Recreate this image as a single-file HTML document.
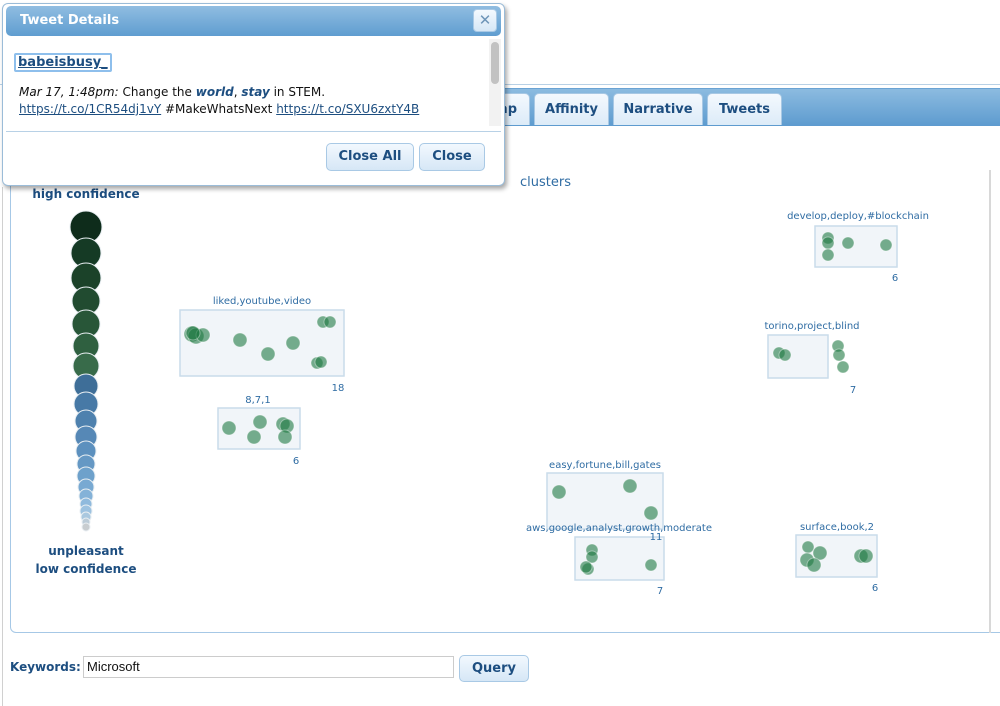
<!DOCTYPE html>
<html><head><meta charset="utf-8"><style>
body{margin:0;width:1000px;height:706px;overflow:hidden;background:#fff;font-family:"DejaVu Sans","Liberation Sans",sans-serif;position:relative}
.abs{position:absolute}
.tabbar{left:10px;top:88px;width:990px;height:37px;background:linear-gradient(#8cbbe0,#5d9bcf);border-top:1px solid #6aa3d3}
.topline{left:0;top:84px;width:1000px;height:1px;background:#b8d1e6}
.tab{top:93px;height:32px;background:linear-gradient(#f4f9fe,#dcebf8);border:1px solid #a8c8e4;border-bottom:none;border-radius:5px 5px 0 0;box-sizing:border-box;font-weight:bold;font-size:13px;color:#1d4e80;text-align:center;line-height:32px;white-space:nowrap;overflow:hidden}
.panel{left:10px;top:125px;width:1000px;height:508px;border:1px solid #a6c8e6;border-top:none;border-radius:0 0 0 6px;box-sizing:border-box}
.dlg{left:2px;top:3px;width:503px;height:183px;background:#fff;border:1px solid #9bbcd8;border-radius:6px;box-shadow:2px 3px 5px rgba(0,0,0,.35);box-sizing:border-box}
.hdr{left:3px;top:2px;width:495px;height:30px;background:linear-gradient(#90bde1,#5f9dd0);border-radius:5px;color:#fff;font-weight:bold;font-size:13px;line-height:30px;text-indent:14px}
.btn{background:linear-gradient(#f2f8fe,#d6e7f6);border:1px solid #a9c9e5;border-radius:5px;color:#1d4e80;font-weight:bold;font-size:13px;text-align:center;box-sizing:border-box}
a{color:#1d4e80}
</style></head><body>
<div class="abs" style="left:2px;top:187px;width:1px;height:519px;background:#d0d0d0"></div>
<div class="abs topline"></div>
<div class="abs tabbar"></div>
<div class="abs tab" style="left:440px;width:90px;text-align:right;padding-right:12px">Map</div>
<div class="abs tab" style="left:534px;width:75px">Affinity</div>
<div class="abs tab" style="left:613px;width:90px">Narrative</div>
<div class="abs tab" style="left:707px;width:75px">Tweets</div>
<div class="abs panel"></div>
<div class="abs" style="left:989px;top:170px;width:2px;height:463px;background:#d8d8d8"></div>

<svg class="abs" style="left:0;top:0" width="1000" height="706">
<g font-family="DejaVu Sans,Liberation Sans,sans-serif" fill="#2f6ca3">
<text x="520" y="186" font-size="13">clusters</text>
<text x="86" y="198" font-size="12" font-weight="bold" fill="#1d4e80" text-anchor="middle">high confidence</text>
<text x="86" y="555" font-size="12" font-weight="bold" fill="#1d4e80" text-anchor="middle">unpleasant</text>
<text x="86" y="573" font-size="12" font-weight="bold" fill="#1d4e80" text-anchor="middle">low confidence</text>
</g>
<g stroke="#e8eef2" stroke-width="1">
<circle cx="86" cy="227" r="16" fill="#0e2c1b"/>
<circle cx="86" cy="253" r="15" fill="#153a25"/>
<circle cx="86" cy="278" r="15" fill="#1b4229"/>
<circle cx="86" cy="301" r="14" fill="#214b30"/>
<circle cx="86" cy="324" r="14" fill="#285638"/>
<circle cx="86" cy="346" r="13" fill="#2f6040"/>
<circle cx="86" cy="366" r="13" fill="#386b4a"/>
<circle cx="86" cy="386" r="12" fill="#3e6e98"/>
<circle cx="86" cy="404" r="12" fill="#4779a6"/>
<circle cx="86" cy="421" r="11" fill="#4e81ae"/>
<circle cx="86" cy="437" r="11" fill="#5688b6"/>
<circle cx="86" cy="451" r="10" fill="#5c90be"/>
<circle cx="86" cy="464" r="9" fill="#6598c4"/>
<circle cx="86" cy="476" r="9" fill="#6ea1cb"/>
<circle cx="86" cy="487" r="8" fill="#78a9d2"/>
<circle cx="86" cy="496" r="7" fill="#84b2d8"/>
<circle cx="86" cy="504" r="6" fill="#90badd"/>
<circle cx="86" cy="511" r="6" fill="#9dc2e0"/>
<circle cx="86" cy="517" r="5" fill="#aac8df"/>
<circle cx="86" cy="522" r="4" fill="#bcccd8"/>
<circle cx="86" cy="527" r="4" fill="#c8cdd0"/>
</g>
<g fill="#f1f5f9" stroke="#c9dbea" stroke-width="1.5">
<rect x="180" y="310" width="164" height="66"/>
<rect x="218" y="408" width="82" height="41"/>
<rect x="815" y="226" width="82" height="41"/>
<rect x="768" y="335" width="60" height="43"/>
<rect x="547" y="473" width="116" height="56"/>
<rect x="575" y="537" width="89" height="43"/>
<rect x="796" y="535" width="81" height="42"/>
</g>
<g font-family="DejaVu Sans,Liberation Sans,sans-serif" font-size="10" fill="#2f6ca3" text-anchor="middle">
<text x="262" y="304">liked,youtube,video</text>
<text x="338" y="391">18</text>
<text x="258" y="403">8,7,1</text>
<text x="296" y="464">6</text>
<text x="858" y="219">develop,deploy,#blockchain</text>
<text x="895" y="281">6</text>
<text x="812" y="329">torino,project,blind</text>
<text x="853" y="393">7</text>
<text x="605" y="468">easy,fortune,bill,gates</text>
<text x="656" y="540">11</text>
<text x="619" y="531">aws,google,analyst,growth,moderate</text>
<text x="660" y="594">7</text>
<text x="837" y="530">surface,book,2</text>
<text x="875" y="591">6</text>
</g>
<g fill="#1f7a42" fill-opacity="0.6" stroke="#fff" stroke-opacity="0.4">
<circle cx="192" cy="334" r="8"/><circle cx="196" cy="336" r="8"/><circle cx="203" cy="335" r="7"/><circle cx="193" cy="333" r="7"/>
<circle cx="240" cy="340" r="7"/><circle cx="268" cy="354" r="7"/><circle cx="293" cy="343" r="7"/>
<circle cx="323" cy="322" r="6"/><circle cx="330" cy="322" r="6"/><circle cx="317" cy="363" r="6"/><circle cx="321" cy="362" r="6"/>
<circle cx="229" cy="428" r="7"/><circle cx="260" cy="422" r="7"/><circle cx="283" cy="424" r="7"/><circle cx="287" cy="426" r="7"/><circle cx="254" cy="437" r="7"/><circle cx="285" cy="437" r="7"/>
<circle cx="828" cy="238" r="6"/><circle cx="828" cy="243" r="6"/><circle cx="848" cy="243" r="6"/><circle cx="886" cy="245" r="6"/><circle cx="828" cy="255" r="6"/>
<circle cx="779" cy="353" r="6"/><circle cx="785" cy="355" r="6"/><circle cx="838" cy="346" r="6"/><circle cx="839" cy="355" r="6"/><circle cx="843" cy="367" r="6"/>
<circle cx="559" cy="492" r="7"/><circle cx="630" cy="486" r="7"/><circle cx="651" cy="513" r="7"/>
<circle cx="592" cy="550" r="6"/><circle cx="592" cy="557" r="6"/><circle cx="588" cy="569" r="6"/><circle cx="586" cy="567" r="6"/><circle cx="651" cy="565" r="6"/>
<circle cx="808" cy="547" r="6"/><circle cx="820" cy="553" r="7"/><circle cx="807" cy="560" r="7"/><circle cx="814" cy="565" r="7"/><circle cx="861" cy="556" r="7"/><circle cx="866" cy="556" r="7"/>
</g>
</svg>

<div class="abs" style="left:10px;top:660px;font-size:12px;font-weight:bold;color:#1d4e80">Keywords:</div>
<div class="abs" style="left:83px;top:656px;width:371px;height:22px;border:1px solid #ccc;box-sizing:border-box;font-size:13px;line-height:20px;padding-left:3px;color:#111;font-family:'Liberation Sans',sans-serif">Microsoft</div>
<div class="abs btn" style="left:459px;top:655px;width:70px;height:27px;line-height:25px">Query</div>

<div class="abs dlg">
<div class="abs hdr">Tweet Details</div>
<div class="abs" style="left:470px;top:5px;width:24px;height:23px;background:linear-gradient(#f4f9fe,#d6e7f6);border:1px solid #a9c9e5;border-radius:4px;box-sizing:border-box;color:#6e95b8;font-weight:bold;font-size:15px;text-align:center;line-height:21px">✕</div>
<div class="abs" style="left:486px;top:35px;width:12px;height:87px;background:#f2f2f2"></div>
<div class="abs" style="left:488px;top:38px;width:8px;height:42px;background:#c2c2c2;border-radius:4px"></div>
<div class="abs" style="left:11px;top:49px;padding:0 2px;border:2px solid #8ebfec;border-radius:2px;font-weight:bold;font-size:13px"><a href="#">babeisbusy_</a></div>
<div class="abs" style="left:16px;top:80px;font-size:12px;line-height:17px;color:#111;width:470px;white-space:nowrap"><i>Mar 17, 1:48pm:</i> Change the <b><i style="color:#1d4e80">world</i></b>, <b><i style="color:#1d4e80">stay</i></b> in STEM.<br><a href="#">https://t.co/1CR54dj1vY</a> #MakeWhatsNext <a href="#">https://t.co/SXU6zxtY4B</a></div>
<div class="abs" style="left:3px;top:127px;width:495px;height:1px;background:#b8d1e6"></div>
<div class="abs btn" style="left:323px;top:139px;width:88px;height:28px;line-height:26px">Close All</div>
<div class="abs btn" style="left:416px;top:139px;width:66px;height:28px;line-height:26px">Close</div>
</div>
</body></html>
